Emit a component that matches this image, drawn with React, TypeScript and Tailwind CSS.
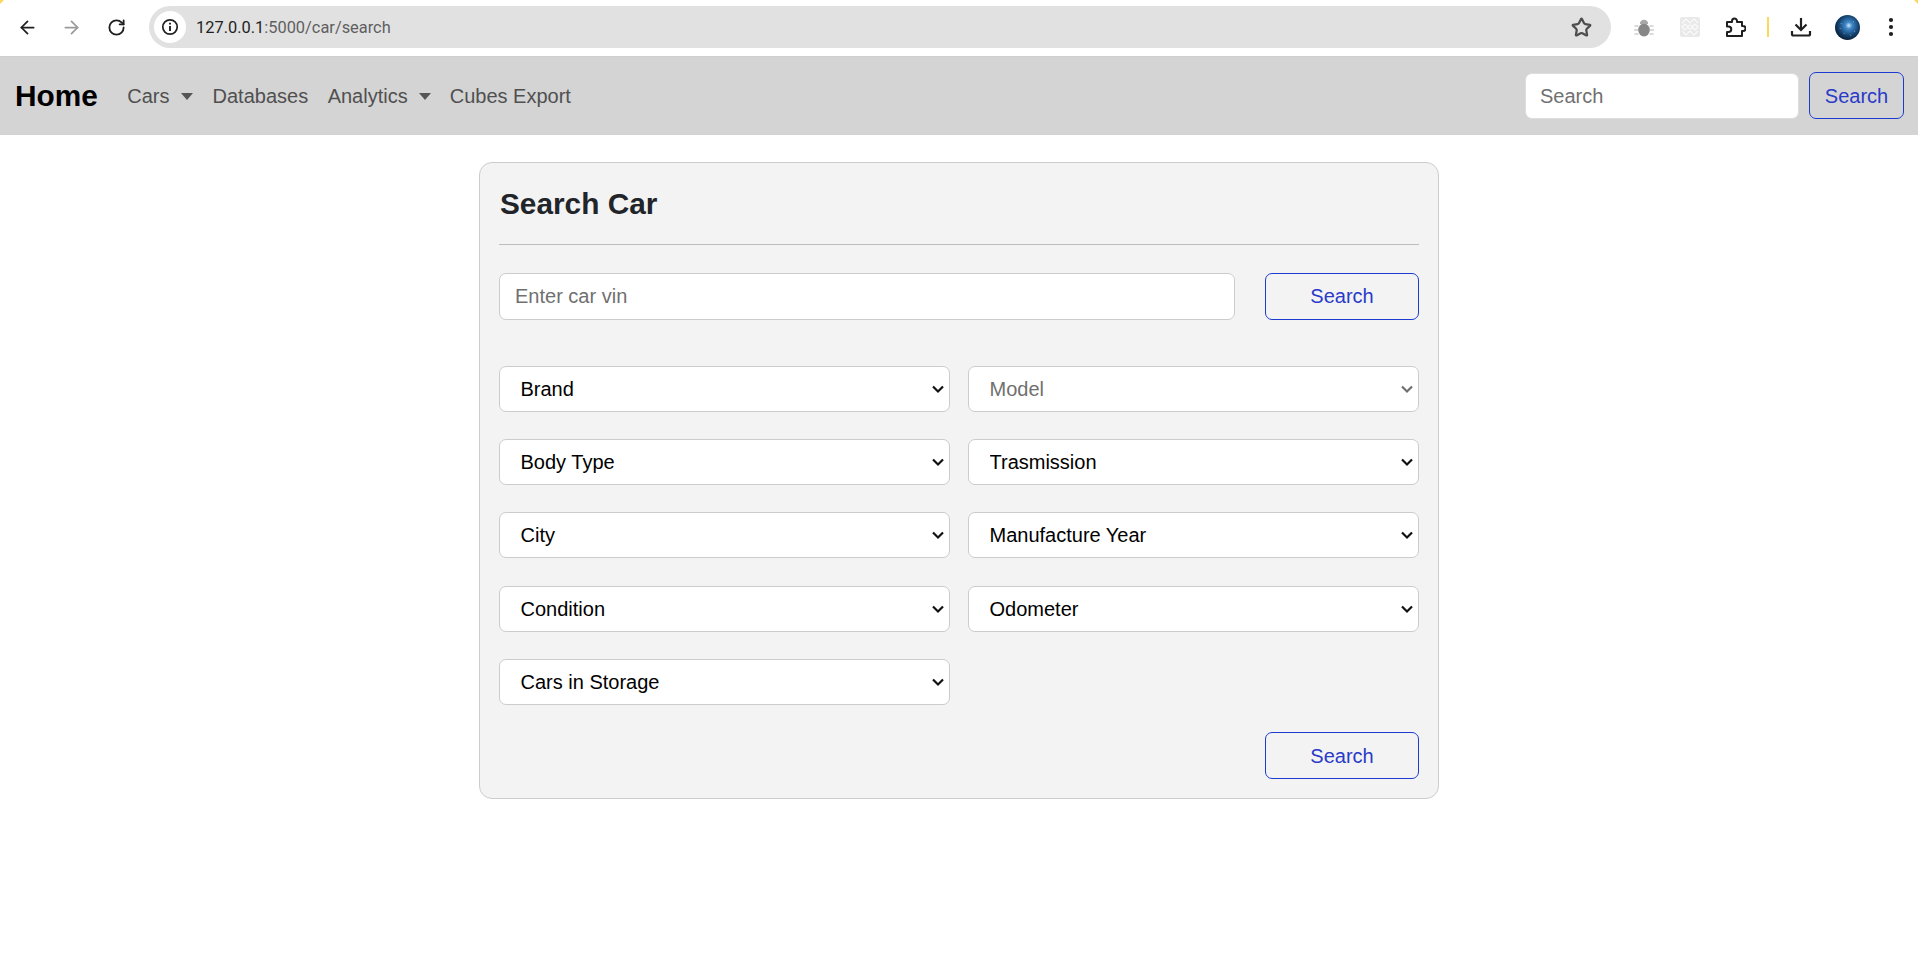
import { ArrowLeft, ArrowRight, RotateCw, Star } from 'lucide-react';

const filters = [
  { label: 'Brand' },
  { label: 'Model', disabled: true },
  { label: 'Body Type' },
  { label: 'Trasmission' },
  { label: 'City' },
  { label: 'Manufacture Year' },
  { label: 'Condition' },
  { label: 'Odometer' },
  { label: 'Cars in Storage' },
];

function BrowserBar() {
  return (
    <div className="relative h-[57px] bg-white border-b border-[#cfcfcf] flex items-start font-['Roboto',sans-serif]">
      {/* yellow corners of the shared-tab frame */}
      <svg className="absolute top-0 left-0" width="4" height="4" viewBox="0 0 4 4">
        <path d="M0 0h4L0 4z" fill="#fbd75b" />
      </svg>
      <svg className="absolute top-0 right-0" width="4" height="4" viewBox="0 0 4 4">
        <path d="M0 0h4v4z" fill="#fbd75b" />
      </svg>
      <div className="w-[149px] h-[54px] flex items-center shrink-0">
        <ArrowLeft className="w-[21px] h-[21px] ml-[17px] text-[#1f1f1f]" strokeWidth={2} />
        <ArrowRight className="w-[21px] h-[21px] ml-[23px] text-[#9a9a9a]" strokeWidth={2} />
        <RotateCw className="w-[19px] h-[19px] ml-[25px] text-[#1f1f1f]" strokeWidth={2.3} />
      </div>
      <div className="mt-[6px] w-[1462px] h-[42px] rounded-full bg-[#e1e1e1] flex items-center pl-[5px] shrink-0">
        <div className="w-[32px] h-[32px] rounded-full bg-white flex items-center justify-center">
          <svg width="18" height="18" viewBox="0 0 18 18" fill="none">
            <circle cx="9" cy="9" r="7.2" stroke="#1f1f1f" strokeWidth="1.7" />
            <path d="M9 8v5" stroke="#1f1f1f" strokeWidth="1.9" />
            <path d="M9 4.7v1.9" stroke="#1f1f1f" strokeWidth="1.9" />
          </svg>
        </div>
        <span className="ml-[10px] mt-[2px] text-[16.4px] leading-none text-[#1f1f1f]">
          127.0.0.1<span className="text-[#5f5f5f]">:5000/car/search</span>
        </span>
        <Star className="w-[21px] h-[21px] ml-auto mr-[19px] text-[#4d4d4d]" strokeWidth={2.6} />
      </div>
      <div className="flex-1 h-[54px] flex items-center">
        <svg className="ml-[23px]" width="20" height="22" viewBox="0 0 20 22">
          <ellipse cx="10" cy="14" rx="5.8" ry="6.5" fill="#878787" />
          <path d="M5.8 8a4.2 4.2 0 0 1 8.4 0z" fill="#a8a8a8" />
          <path d="M0.5 10h4M0 14h4M0.5 18h4M15.5 10h4M16 14h4M15.5 18h4" stroke="#b5b5b5" strokeWidth="1" />
        </svg>
        <svg className="ml-[26px]" width="20" height="20" viewBox="0 0 20 20">
          <rect width="20" height="20" rx="2" fill="#e9e9e9" />
          <path d="M2 6l4-4 4 4 4-4 4 4M2 14l4 4 4-4 4 4 4-4M2 10l3-3 3 3-3 3zM12 10l3-3 3 3-3 3z" fill="none" stroke="#fafafa" strokeWidth="1.2" />
          <circle cx="10" cy="10" r="2" fill="none" stroke="#fafafa" strokeWidth="1.2" />
        </svg>
        <svg className="ml-[24px]" width="22" height="22" viewBox="0 0 22 22" fill="none" stroke="#1f1f1f" strokeWidth="2" strokeLinejoin="round">
          <path d="M3 6h5V5a2.5 2.5 0 0 1 5 0v1h5v4h1a2.5 2.5 0 0 1 0 5h-1v5H3v-4h1.5a2.5 2.5 0 0 0 0-5.5H3z" />
        </svg>
        <div className="w-[2px] h-[20px] bg-[#fbd75b] ml-[21px]" />
        <svg className="ml-[21px]" width="22" height="22" viewBox="0 0 22 22" fill="none" stroke="#1f1f1f" strokeWidth="2.2">
          <path d="M11 2v11" />
          <path d="M5.5 8.5L11 14l5.5-5.5" />
          <path d="M2 15v3a1.5 1.5 0 0 0 1.5 1.5h15A1.5 1.5 0 0 0 20 18v-3" />
        </svg>
        <svg className="ml-[23px]" width="25" height="25" viewBox="0 0 26 26">
          <defs>
            <radialGradient id="avatar" cx="0.55" cy="0.42" r="0.62">
              <stop offset="0" stopColor="#cfe6fb" />
              <stop offset="0.22" stopColor="#3f88c9" />
              <stop offset="0.65" stopColor="#14426f" />
              <stop offset="1" stopColor="#08182b" />
            </radialGradient>
          </defs>
          <circle cx="13" cy="13" r="13" fill="url(#avatar)" />
          <path d="M6 9h.8M19 7h.8M20 17h.8M9 19h.8M5 14h.8M16 21h.8" stroke="#8fc4ee" strokeWidth="0.9" />
        </svg>
        <svg className="ml-[28px]" width="6" height="22" viewBox="0 0 6 22" fill="#1f1f1f">
          <circle cx="3" cy="4" r="2.1" />
          <circle cx="3" cy="11" r="2.1" />
          <circle cx="3" cy="18" r="2.1" />
        </svg>
      </div>
    </div>
  );
}

function Caret() {
  return <span className="ml-[11px] w-0 h-0 border-x-[6px] border-x-transparent border-t-[7px] border-t-[#555555]" />;
}

function Navbar() {
  return (
    <nav className="h-[78px] bg-[#d4d4d4] flex items-center text-[20px] text-[#505050]">
      <a className="ml-[15px] text-[29.8px] font-bold text-black leading-none">Home</a>
      <a className="ml-[29.5px] flex items-center">Cars<Caret /></a>
      <a className="ml-[20px]">Databases</a>
      <a className="ml-[19.5px] flex items-center">Analytics<Caret /></a>
      <a className="ml-[19px]">Cubes Export</a>
      <div className="ml-auto mr-[14px] flex items-center gap-[10px]">
        <input
          placeholder="Search"
          className="w-[274px] h-[46px] rounded-[7px] bg-white border border-[#dedede] px-[14px] placeholder:text-[#707070] outline-none"
        />
        <button className="w-[95px] h-[47px] mb-px rounded-[7px] border border-[#1d3bd1] text-[#2a3bc8]">Search</button>
      </div>
    </nav>
  );
}

function FilterSelect({ label, disabled }: { label: string; disabled?: boolean }) {
  return (
    <div className="relative">
      <select
        disabled={disabled}
        className={`appearance-none w-full h-[46px] rounded-[7px] border border-[#cccccc] bg-white pl-[20.5px] pr-[30px] outline-none ${disabled ? 'text-[#707070]' : 'text-black'}`}
      >
        <option>{label}</option>
      </select>
      {/* chevron drawn by hand, the native one is too small here */}
      <svg className="absolute right-[5px] top-[19px] pointer-events-none" width="14" height="9" viewBox="0 0 14 9" fill="none">
        <path d="M2 1.5l5 5 5-5" stroke={disabled ? '#6f6f6f' : '#111111'} strokeWidth="2.2" />
      </svg>
    </div>
  );
}

function SearchCard() {
  return (
    <div className="w-[960px] mx-auto mt-[27px] rounded-[13px] border border-[#cccccc] bg-[#f3f3f3] pt-[20px] pb-[19px] px-[19px] text-[20px]">
      <h3 className="h-[40px] flex items-center pl-px pt-[2px] text-[29.8px] font-bold text-[#212529] mb-[21px]">Search Car</h3>
      <hr className="border-t border-[#bdbdbd] mb-[28px]" />
      <div className="flex gap-[30px] mb-[46px]">
        <input
          placeholder="Enter car vin"
          className="flex-1 h-[47px] rounded-[7px] bg-white border border-[#cccccc] px-[15px] placeholder:text-[#707070] outline-none"
        />
        <button className="w-[154px] h-[47px] pb-[2px] rounded-[7px] border border-[#1d3bd1] text-[#2a3bc8]">Search</button>
      </div>
      <div className="grid grid-cols-2 gap-x-[18px] gap-y-[27.2px]">
        {filters.map((f) => (
          <FilterSelect key={f.label} label={f.label} disabled={f.disabled} />
        ))}
      </div>
      <div className="flex justify-end mt-[27.2px]">
        <button className="w-[154px] h-[47px] pt-[1px] rounded-[7px] border border-[#1d3bd1] text-[#2a3bc8]">Search</button>
      </div>
    </div>
  );
}

export default function App() {
  return (
    <div className="min-h-[959px] bg-white font-['Liberation_Sans',Arial,sans-serif]">
      <BrowserBar />
      <Navbar />
      <SearchCard />
    </div>
  );
}
